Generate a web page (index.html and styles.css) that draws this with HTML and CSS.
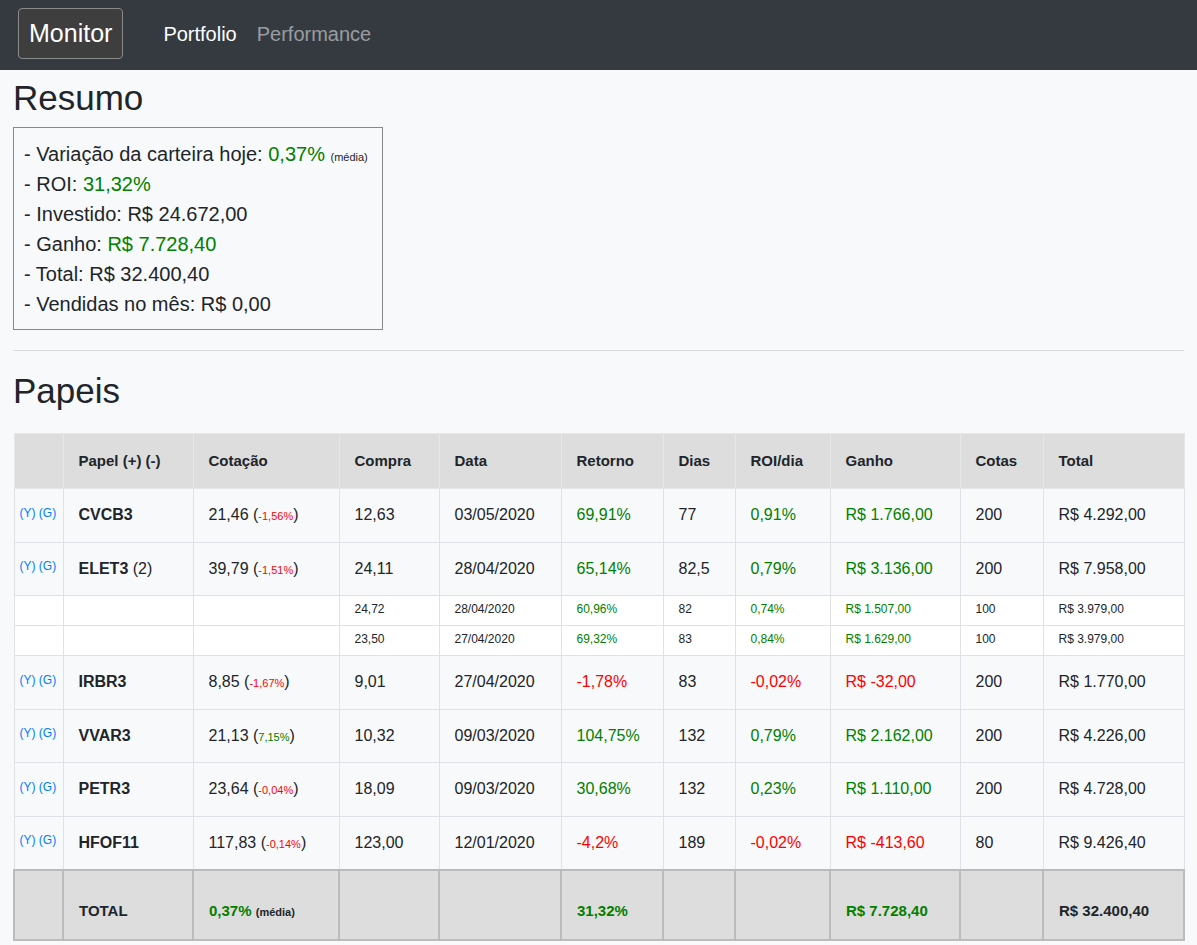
FILE: index.html
```html
<!DOCTYPE html>
<html lang="pt-BR">
<head>
<meta charset="utf-8">
<title>Monitor</title>
<link rel="stylesheet" href="styles.css">
</head>
<body>
<nav class="navbar">
  <a class="brand" href="#">Monitor</a>
  <a class="nav-link active" href="#">Portfolio</a>
  <a class="nav-link" href="#">Performance</a>
</nav>
<main class="container">
  <h1 class="title">Resumo</h1>
  <div class="summary">
    <div>- Variação da carteira hoje: <span class="pos">0,37%</span> <small class="note">(média)</small></div>
    <div>- ROI: <span class="pos">31,32%</span></div>
    <div>- Investido: R$ 24.672,00</div>
    <div>- Ganho: <span class="pos">R$ 7.728,40</span></div>
    <div>- Total: R$ 32.400,40</div>
    <div>- Vendidas no mês: R$ 0,00</div>
  </div>
  <hr class="divider">
  <h1 class="title">Papeis</h1>
  <table class="papers">
    <colgroup>
      <col style="width:49px"><col style="width:130px"><col style="width:146px"><col style="width:100px"><col style="width:122px"><col style="width:102px"><col style="width:72px"><col style="width:95px"><col style="width:130px"><col style="width:83px"><col style="width:141px">
    </colgroup>
    <thead>
      <tr><th></th><th>Papel (+) (-)</th><th>Cotação</th><th>Compra</th><th>Data</th><th>Retorno</th><th>Dias</th><th>ROI/dia</th><th>Ganho</th><th>Cotas</th><th>Total</th></tr>
    </thead>
    <tbody>
      <tr class="main">
        <td class="links"><a href="#">(Y)</a> <a href="#">(G)</a></td>
        <td><b>CVCB3</b></td>
        <td>21,46 (<span class="chg neg">-1,56%</span>)</td>
        <td>12,63</td><td>03/05/2020</td><td class="pos">69,91%</td><td>77</td><td class="pos">0,91%</td><td class="pos">R$ 1.766,00</td><td>200</td><td>R$ 4.292,00</td>
      </tr>
      <tr class="main">
        <td class="links"><a href="#">(Y)</a> <a href="#">(G)</a></td>
        <td><b>ELET3</b> (2)</td>
        <td>39,79 (<span class="chg neg">-1,51%</span>)</td>
        <td>24,11</td><td>28/04/2020</td><td class="pos">65,14%</td><td>82,5</td><td class="pos">0,79%</td><td class="pos">R$ 3.136,00</td><td>200</td><td>R$ 7.958,00</td>
      </tr>
      <tr class="sub">
        <td></td><td></td><td></td>
        <td>24,72</td><td>28/04/2020</td><td class="pos">60,96%</td><td>82</td><td class="pos">0,74%</td><td class="pos">R$ 1.507,00</td><td>100</td><td>R$ 3.979,00</td>
      </tr>
      <tr class="sub">
        <td></td><td></td><td></td>
        <td>23,50</td><td>27/04/2020</td><td class="pos">69,32%</td><td>83</td><td class="pos">0,84%</td><td class="pos">R$ 1.629,00</td><td>100</td><td>R$ 3.979,00</td>
      </tr>
      <tr class="main">
        <td class="links"><a href="#">(Y)</a> <a href="#">(G)</a></td>
        <td><b>IRBR3</b></td>
        <td>8,85 (<span class="chg neg">-1,67%</span>)</td>
        <td>9,01</td><td>27/04/2020</td><td class="neg">-1,78%</td><td>83</td><td class="neg">-0,02%</td><td class="neg">R$ -32,00</td><td>200</td><td>R$ 1.770,00</td>
      </tr>
      <tr class="main">
        <td class="links"><a href="#">(Y)</a> <a href="#">(G)</a></td>
        <td><b>VVAR3</b></td>
        <td>21,13 (<span class="chg pos">7,15%</span>)</td>
        <td>10,32</td><td>09/03/2020</td><td class="pos">104,75%</td><td>132</td><td class="pos">0,79%</td><td class="pos">R$ 2.162,00</td><td>200</td><td>R$ 4.226,00</td>
      </tr>
      <tr class="main">
        <td class="links"><a href="#">(Y)</a> <a href="#">(G)</a></td>
        <td><b>PETR3</b></td>
        <td>23,64 (<span class="chg neg">-0,04%</span>)</td>
        <td>18,09</td><td>09/03/2020</td><td class="pos">30,68%</td><td>132</td><td class="pos">0,23%</td><td class="pos">R$ 1.110,00</td><td>200</td><td>R$ 4.728,00</td>
      </tr>
      <tr class="main">
        <td class="links"><a href="#">(Y)</a> <a href="#">(G)</a></td>
        <td><b>HFOF11</b></td>
        <td>117,83 (<span class="chg neg">-0,14%</span>)</td>
        <td>123,00</td><td>12/01/2020</td><td class="neg">-4,2%</td><td>189</td><td class="neg">-0,02%</td><td class="neg">R$ -413,60</td><td>80</td><td>R$ 9.426,40</td>
      </tr>
    </tbody>
    <tfoot>
      <tr>
        <td></td><td>TOTAL</td><td><span class="pos">0,37%</span> <small class="foot-note">(média)</small></td><td></td><td></td><td class="pos">31,32%</td><td></td><td></td><td class="pos">R$ 7.728,40</td><td></td><td>R$ 32.400,40</td>
      </tr>
    </tfoot>
  </table>
</main>
</body>
</html>
```

FILE: styles.css
```css
* { box-sizing: border-box; }
html, body { margin: 0; padding: 0; }
body {
  background: #f8f9fa;
  color: #212529;
  font-family: "Liberation Sans", Arial, sans-serif;
  font-size: 16px;
  line-height: 1.5;
}
a { text-decoration: none; }

.navbar {
  height: 70px;
  background: #343a40;
  display: flex;
  align-items: center;
  padding: 0 18px;
}
.brand {
  display: flex;
  align-items: center;
  height: 51px;
  padding: 0 10px;
  margin-top: -3px;
  color: #fff;
  font-size: 25px;
  background: #3e3e3e;
  border: 1px solid #8a8a8a;
  border-radius: 4px;
  margin-right: 30px;
}
.nav-link {
  font-size: 20px;
  color: rgba(255,255,255,.5);
  padding: 0 10px;
  margin-top: -3px;
}
.nav-link.active { color: #fff; }

.container { padding: 7px 13px 0; }
.title {
  font-size: 35px;
  font-weight: 400;
  line-height: 1.2;
  margin: 0 0 8px;
}
.summary {
  width: 370px;
  border: 1px solid #888;
  padding: 11px 10px 10px;
  font-size: 20px;
  line-height: 30px;
}
.summary .note { font-size: 11px; line-height: 1; }
.pos { color: green; }
.neg { color: red; }

.divider {
  border: 0;
  border-top: 1px solid #dcdcdc;
  margin: 20px 0 19px;
}

.papers {
  width: 1170px;
  table-layout: fixed;
  border-collapse: collapse;
  margin-top: 21px;
  border: 1px solid #dee2e6;
}
.papers th, .papers td {
  border: 1px solid #dee2e6;
  padding: 0 15px;
  text-align: left;
  vertical-align: middle;
}
.papers thead th {
  background: #dddddd;
  border-color: #e6e6e6;
  font-size: 15px;
  font-weight: 700;
  height: 55px;
}
.papers tr.main td { height: 53.5px; font-size: 16px; }
.papers tr.main td.links {
  padding: 0 0 5px 5px;
  font-size: 12px;
  line-height: 1;
  white-space: nowrap;
}
.papers td.links a { color: #007bff; }
.papers .chg { font-size: 11px; }
.papers tr.sub td {
  background: #fff;
  height: 30px;
  font-size: 12px;
  line-height: 16px;
  padding-bottom: 4px;
}
.papers tfoot td {
  background: #dddddd;
  border: 2px solid #bbbbbb;
  height: 70px;
  font-size: 15px;
  font-weight: 700;
  vertical-align: bottom;
  padding-bottom: 16px;
}
.papers tfoot .foot-note { font-size: 11px; color: #212529; }
```
